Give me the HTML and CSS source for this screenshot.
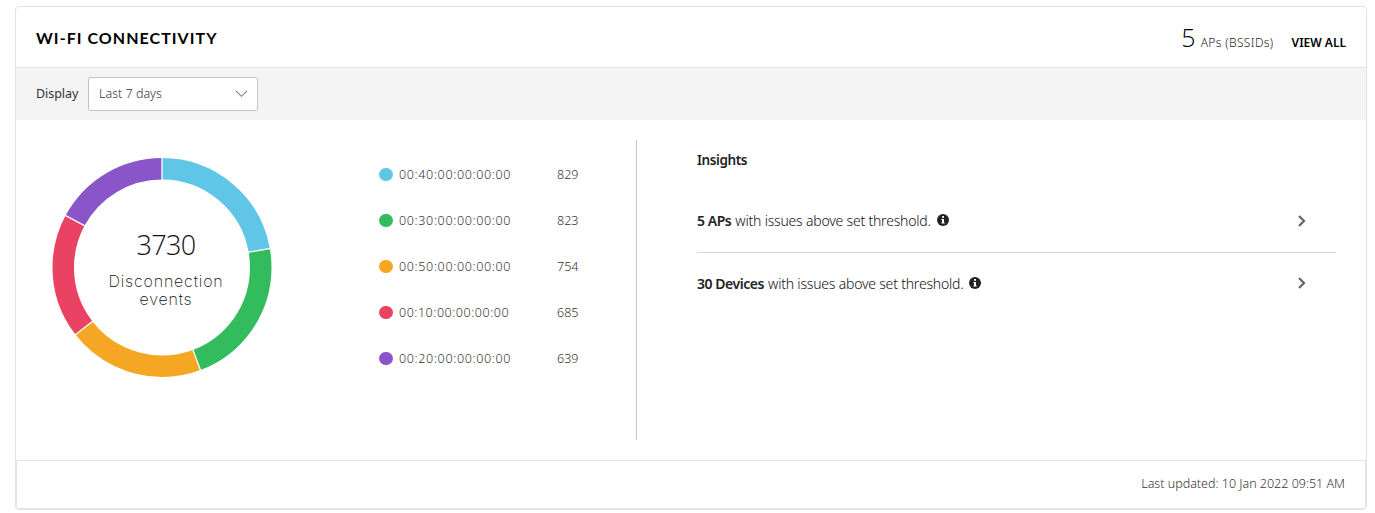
FILE: index.html
```
<!DOCTYPE html>
<html lang="en">
<head>
<meta charset="utf-8">
<title>Wi-Fi connectivity</title>
<link rel="stylesheet" href="styles.css">
</head>
<body>
<section class="card">
  <header class="head">
    <h2 class="title">WI-FI CONNECTIVITY</h2>
    <div class="summary"><span class="count">5</span><span class="unit">APs (BSSIDs)</span><a class="view">VIEW ALL</a></div>
  </header>
  <div class="filter">
    <span class="filter-label">Display</span>
    <div class="select"><span class="select-text">Last 7 days</span>
      <svg class="caret" width="13" height="8" viewBox="0 0 13 8"><path d="M1 1l5.5 5.3L12 1" fill="none" stroke="#858585" stroke-width="1.1"/></svg>
    </div>
  </div>
  <div class="body">
    <div class="chart">
      <svg class="donut" width="220" height="220" viewBox="-110 -110.5 220 220">
        <g fill="none" stroke-width="21.5" transform="rotate(-90)">
          <circle r="98.75" pathLength="3730" stroke="#60c6e8" stroke-dasharray="829 2901"/>
          <circle r="98.75" pathLength="3730" stroke="#33bc5e" stroke-dasharray="823 2907" stroke-dashoffset="-829"/>
          <circle r="98.75" pathLength="3730" stroke="#f5a623" stroke-dasharray="754 2976" stroke-dashoffset="-1652"/>
          <circle r="98.75" pathLength="3730" stroke="#ea4262" stroke-dasharray="685 3045" stroke-dashoffset="-2406"/>
          <circle r="98.75" pathLength="3730" stroke="#8a55c8" stroke-dasharray="639 3091" stroke-dashoffset="-3091"/>
        </g>
        <g stroke="#fff" stroke-width="1.3">
          <path d="M0-86v-25"/>
          <path d="M0-86v-25" transform="rotate(80.01)"/>
          <path d="M0-86v-25" transform="rotate(159.44)"/>
          <path d="M0-86v-25" transform="rotate(232.21)"/>
          <path d="M0-86v-25" transform="rotate(298.33)"/>
        </g>
      </svg>
      <div class="center"><span class="total">3730</span><span class="caption">Disconnection</span><span class="caption">events</span></div>
    </div>
    <ul class="legend">
      <li class="item"><i class="dot blue"></i><span class="mac">00:40:00:00:00:00</span><span class="value">829</span></li>
      <li class="item"><i class="dot green"></i><span class="mac">00:30:00:00:00:00</span><span class="value">823</span></li>
      <li class="item"><i class="dot orange"></i><span class="mac">00:50:00:00:00:00</span><span class="value">754</span></li>
      <li class="item"><i class="dot red"></i><span class="mac ten">00:10:00:00:00:00</span><span class="value">685</span></li>
      <li class="item"><i class="dot purple"></i><span class="mac">00:20:00:00:00:00</span><span class="value">639</span></li>
    </ul>
    <div class="insights">
      <h3 class="subtitle">Insights</h3>
      <div class="row first"><b class="strong">5 APs</b><span class="message">with issues above set threshold.</span>
        <svg class="info" width="12" height="12" viewBox="0 0 12 12"><circle cx="6" cy="6" r="6" fill="#222"/><path d="M5 2h2v1.7H5zM4.4 5H7v3.6h.7v1H4.4v-1H5V6h-.6z" fill="#fff"/></svg>
        <svg class="arrow" width="8" height="12" viewBox="0 0 8 12"><path d="M1 1l5 5-5 5" fill="none" stroke="#666" stroke-width="2.2"/></svg>
      </div>
      <div class="row"><b class="strong">30 Devices</b><span class="message">with issues above set threshold.</span>
        <svg class="info" width="12" height="12" viewBox="0 0 12 12"><circle cx="6" cy="6" r="6" fill="#222"/><path d="M5 2h2v1.7H5zM4.4 5H7v3.6h.7v1H4.4v-1H5V6h-.6z" fill="#fff"/></svg>
        <svg class="arrow" width="8" height="12" viewBox="0 0 8 12"><path d="M1 1l5 5-5 5" fill="none" stroke="#666" stroke-width="2.2"/></svg>
      </div>
    </div>
  </div>
  <footer class="foot"><span class="updated">Last updated: 10 Jan 2022 09:51 AM</span></footer>
</section>
</body>
</html>
```
FILE: styles.css
```
* { box-sizing: border-box; }
body { margin: 0; padding: 6px 8px 0 15px; background: #fff; font-family: "Noto Sans", "Open Sans", sans-serif; color: #333; }
.card { height: 504px; border: 1px solid #e3e3e3; border-radius: 4px; display: flex; flex-direction: column; overflow: hidden; }
.head { height: 61px; padding: 0 20px; border-bottom: 1px solid #e3e3e3; display: flex; justify-content: space-between; flex: none; }
.title { margin: 19px 0 0; font: 700 16px/24px Lato, sans-serif; letter-spacing: 1.04px; color: #000; white-space: nowrap; }
.summary { display: flex; align-items: baseline; height: 60px; line-height: 61px; white-space: nowrap; }
.count { font-family: "Open Sans", sans-serif; font-weight: 300; font-size: 25px; color: #000; margin-right: 5px; }
.unit { font-size: 12px; font-weight: 300; letter-spacing: .38px; color: #222; margin-right: 18px; }
.view { font-size: 12px; font-weight: 600; color: #000; }
.filter { height: 52px; flex: none; padding-left: 20px; background: #f4f4f4; display: flex; align-items: center; font-size: 12.5px; }
.filter-label { width: 52px; padding-bottom: 1px; letter-spacing: -.05px; }
.select { width: 170px; height: 34px; border: 1px solid #c4c4c4; border-radius: 2px; background: #fff; padding: 0 9px 0 10px; display: flex; align-items: center; justify-content: space-between; }
.select-text { font-weight: 350; padding-bottom: 2px; }
.body { height: 340px; flex: none; padding: 20px 30px 20px 36px; display: flex; }
.chart { width: 327px; padding-top: 17px; position: relative; }
.donut { display: block; }
.center { position: absolute; left: 54px; top: 89px; width: 120px; text-align: center; color: #111; font-weight: 300; }
.total { display: block; font-family: "Open Sans", sans-serif; font-size: 27px; line-height: 32px; letter-spacing: -.6px; margin-bottom: 11px; }
.caption { display: block; font-family: Inter, sans-serif; font-weight: 200; font-size: 16px; line-height: 18px; letter-spacing: .8px; white-space: nowrap; }
.legend { margin: 0; padding: 12px 0 0; list-style: none; width: 258px; height: 300px; border-right: 1px solid #c8c8c8; }
.item { height: 46px; display: flex; align-items: center; font-size: 12.5px; line-height: 46px; font-weight: 350; }
.dot { width: 13.5px; height: 13.5px; border-radius: 50%; margin: 0 6.5px 1px 0; }
.blue { background: #60c6e8; }
.green { background: #33bc5e; }
.orange { background: #f5a623; }
.red { background: #ea4262; }
.purple { background: #8a55c8; }
.mac { width: 158px; letter-spacing: .66px; }
.ten { letter-spacing: .54px; }
.insights { flex: 1; margin-left: 60px; color: #111; font-size: 14px; }
.subtitle { margin: 0; height: 49px; font-size: 13.5px; line-height: 40px; font-weight: 600; letter-spacing: -.42px; color: #222; }
.row { height: 60px; display: flex; align-items: center; padding-right: 30px; white-space: nowrap; }
.first { height: 64px; border-bottom: 1px solid #d8d8d8; }
.strong { font-weight: 600; letter-spacing: -.45px; color: #222; margin-right: 4px; }
.message { font-weight: 300; letter-spacing: -.2px; }
.info { margin: 0 0 1px 6px; }
.arrow { margin-left: auto; }
.foot { flex: 1; border: 1px solid #e3e3e3; padding: 0 20px 2px; display: flex; justify-content: flex-end; align-items: center; font-size: 12.5px; font-weight: 350; white-space: nowrap; }
```
